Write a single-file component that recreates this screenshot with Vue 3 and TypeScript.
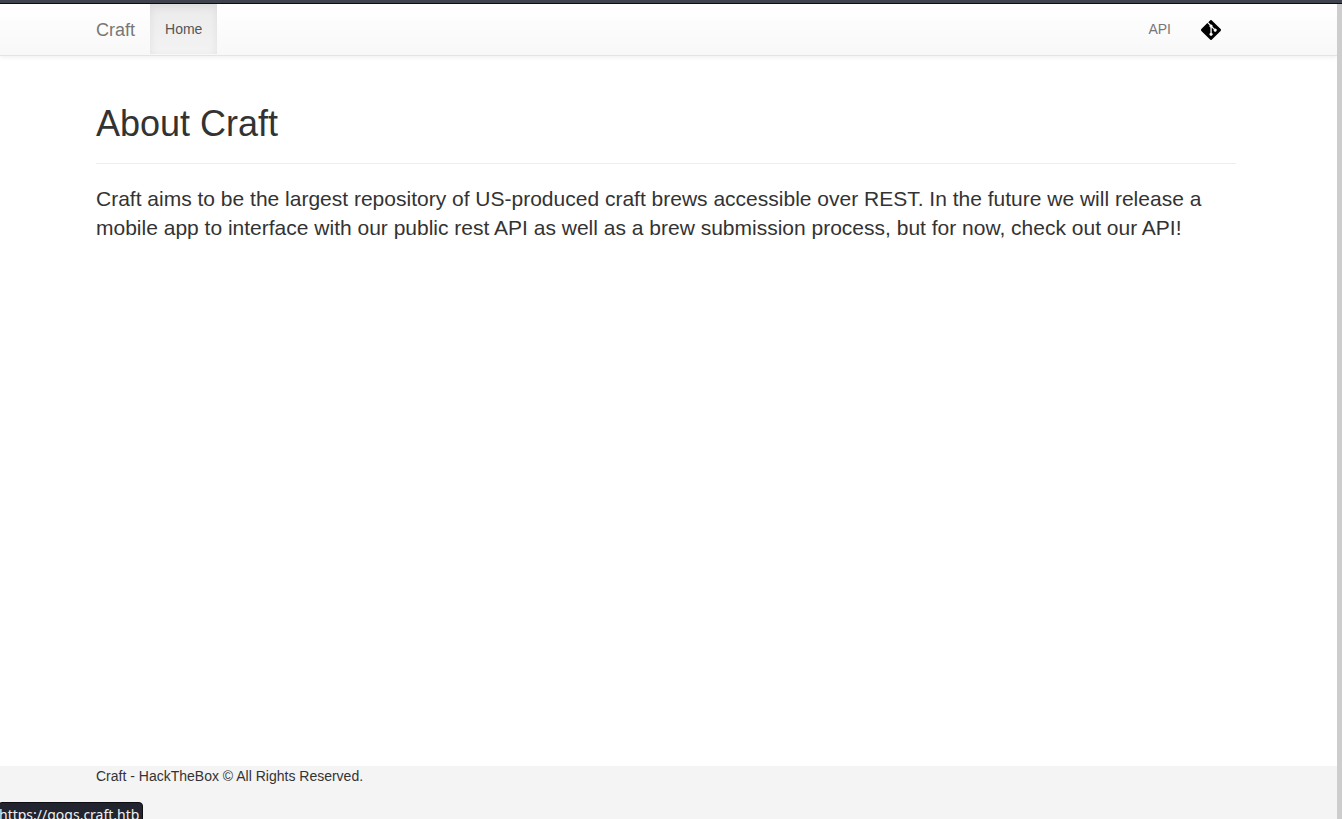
<script setup lang="ts">
interface NavItem {
  label: string
  href: string
  active: boolean
}

const brand = 'Craft'
const leftItems: NavItem[] = [{ label: 'Home', href: '#home', active: true }]
const rightItems: NavItem[] = [{ label: 'API', href: '#api', active: false }]
const repoUrl = 'https://gogs.craft.htb'
</script>

<template>
  <div class="window">
    <div class="page">
      <nav class="navbar">
        <a class="brand" href="#home">{{ brand }}</a>
        <ul class="nav">
          <li v-for="item in leftItems" :key="item.label">
            <a :href="item.href" class="nav-link" :class="{ active: item.active }">{{ item.label }}</a>
          </li>
        </ul>
        <ul class="nav nav-right">
          <li v-for="item in rightItems" :key="item.label">
            <a :href="item.href" class="nav-link">{{ item.label }}</a>
          </li>
          <li>
            <a :href="repoUrl" class="nav-link nav-icon" aria-label="Git repository">
              <svg class="git" viewBox="0 0 92 92" aria-hidden="true">
                <path
                  d="M90.156 41.965 50.036 1.848a5.918 5.918 0 0 0-8.372 0l-8.328 8.332 10.566 10.566a7.03 7.03 0 0 1 7.23 1.684 7.034 7.034 0 0 1 1.669 7.277l10.187 10.184a7.028 7.028 0 0 1 7.278 1.672 7.04 7.04 0 0 1 0 9.957 7.05 7.05 0 0 1-9.965 0 7.044 7.044 0 0 1-1.528-7.66l-9.5-9.497V59.36a7.04 7.04 0 0 1 1.86 11.29 7.04 7.04 0 0 1-9.957 0 7.04 7.04 0 0 1 0-9.958 7.06 7.06 0 0 1 2.304-1.539V33.926a7.049 7.049 0 0 1-3.82-9.234L29.242 14.272 1.73 41.777a5.918 5.918 0 0 0 0 8.371L41.852 90.27a5.925 5.925 0 0 0 8.37 0l39.934-39.934a5.925 5.925 0 0 0 0-8.371"
                />
              </svg>
            </a>
          </li>
        </ul>
      </nav>

      <main class="content">
        <h1>About Craft</h1>
        <p class="lead">
          Craft aims to be the largest repository of US-produced craft brews accessible over REST. In
          the future we will release a mobile app to interface with our public rest API as well as a
          brew submission process, but for now, check out our API!
        </p>
      </main>

      <footer class="footer">Craft - HackTheBox © All Rights Reserved.</footer>
    </div>
    <div class="status">{{ repoUrl }}</div>
  </div>
</template>

<style>
body {
  margin: 0;
}
</style>

<style scoped>
.window {
  box-sizing: border-box;
  position: relative;
  display: flex;
  min-height: 100vh;
  overflow: hidden;
  border-top: 3px solid #40434e;
  background: #fff;
  color: #333;
  font: 14px/20px "Liberation Sans", Arial, sans-serif;
}

.window::after {
  width: 5px;
  margin-top: 1px;
  background: #cdcdcd;
  box-shadow: 0 -1px #0c0c14;
  content: "";
}

.page {
  display: flex;
  flex: 1;
  flex-direction: column;
  min-width: 0;
  box-shadow: inset 0 1px #0c0c14;
  padding-top: 1px;
}

.navbar {
  display: flex;
  padding: 0 101px 1px 96px;
  border-bottom: 1px solid #e4e4e4;
  background: linear-gradient(#fff, #f8f8f8);
  box-shadow: 0 1px 5px rgba(0, 0, 0, 0.075);
  clip-path: inset(0 0 -8px 0);
}

.brand {
  padding: 16px 15px 14px 0;
  color: #777;
  font-size: 18px;
  text-decoration: none;
}

.nav {
  display: flex;
  margin: 0;
  padding: 0;
  list-style: none;
}

.nav-right {
  margin-left: auto;
}

.nav-link {
  display: block;
  padding: 15px;
  color: #777;
  text-decoration: none;
}

.nav-link.active {
  background: linear-gradient(#ebebeb, #f3f3f3);
  box-shadow: inset 0 3px 9px rgba(0, 0, 0, 0.075);
  color: #555;
}

.nav-icon {
  padding: 16px 15px 14px;
}

.git {
  display: block;
  width: 20px;
  height: 20px;
  fill: #000;
}

.content {
  flex: 1;
  padding: 48px 101px 20px 96px;
}

h1 {
  margin: 0 0 20px;
  padding-bottom: 19px;
  border-bottom: 1px solid #eee;
  font-size: 36px;
  font-weight: 400;
  line-height: 40px;
}

.lead {
  margin: 0;
  font-size: 21px;
  line-height: 29px;
}

.footer {
  min-height: 53px;
  padding: 0 101px 0 96px;
  background: #f4f4f4;
}

.status {
  position: absolute;
  bottom: -9px;
  left: -2px;
  padding: 2px 3px 2px 0;
  border: 1px solid #0c0c12;
  border-radius: 4px;
  background: #22252f;
  color: #f0f0f0;
  font: 14px/20px "Noto Sans", sans-serif;
}
</style>
